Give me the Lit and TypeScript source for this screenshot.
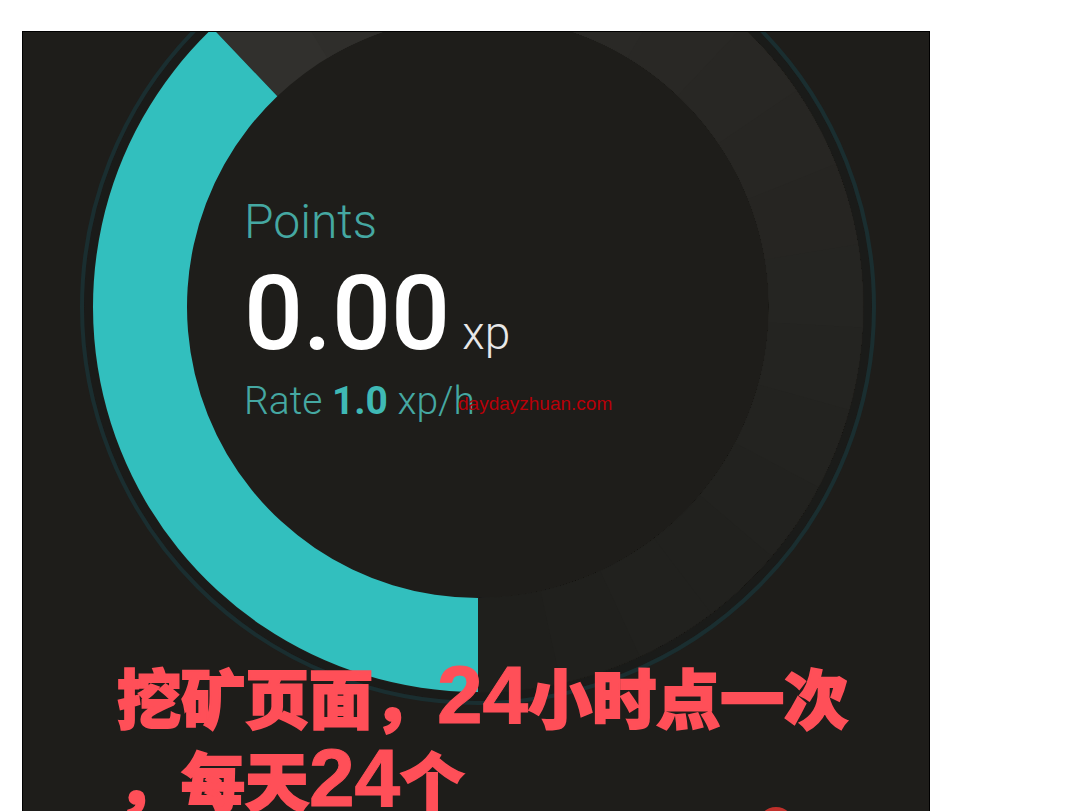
import { LitElement, html, svg, css } from "lit";
import { customElement, property } from "lit/decorators.js";

const CX = 455;
const CY = 275;
const INNER = 291;
const OUTER = 385;

/** Angles run clockwise in degrees, with 0 at the top of the dial. */
function point(radius: number, angle: number): string {
  const rad = (angle * Math.PI) / 180;
  return `${(CX + radius * Math.sin(rad)).toFixed(2)} ${(CY - radius * Math.cos(rad)).toFixed(2)}`;
}

function band(from: number, to: number): string {
  const large = to - from > 180 ? 1 : 0;
  return `M${point(OUTER, from)}A${OUTER} ${OUTER} 0 ${large} 1 ${point(OUTER, to)}L${point(INNER, to)}A${INNER} ${INNER} 0 ${large} 0 ${point(INNER, from)}Z`;
}

const FILL_START = 180;
const FILL_END = 316.4;

@customElement("points-dial")
class PointsDial extends LitElement {
  static styles = css`
    :host {
      display: block;
    }
    .dial {
      display: block;
      width: 100%;
      height: auto;
    }
    .halo {
      fill: none;
      stroke: #1a2e30;
      stroke-width: 4;
    }
    .gap {
      fill: none;
      stroke: #1a1b19;
      stroke-width: 8;
    }
    .fill {
      fill: #32bfbe;
    }
    .alert {
      fill: #c0302b;
    }
  `;

  render() {
    const start = FILL_END - 360;
    const steps = 18;
    const span = FILL_START - start;
    // Each step is painted over the tail of the one before, so no seams show.
    const track = Array.from({ length: steps }, (_, i) => {
      const t = i / (steps - 1);
      const mix = (a: number, b: number) => Math.round(a + (b - a) * Math.pow(t, 0.75));
      return svg`<path d=${band(start + (span * i) / steps, FILL_START)}
        fill="rgb(${mix(49, 31)},${mix(48, 31)},${mix(45, 28)})"></path>`;
    });
    return html`
      <svg class="dial" viewBox="0 0 906 784" aria-hidden="true">
        <circle class="gap" cx=${CX} cy=${CY} r="390"></circle>
        <circle class="halo" cx=${CX} cy=${CY} r="396"></circle>
        ${track}
        <path class="fill" d=${band(FILL_START, FILL_END)}></path>
        <circle class="alert" cx="753" cy="793" r="18"></circle>
      </svg>
    `;
  }
}

@customElement("app-root")
class AppRoot extends LitElement {
  @property() points = "0.00";
  @property() rate = "1.0";

  static styles = css`
    :host {
      display: block;
      box-sizing: border-box;
      height: 100vh;
      overflow: hidden;
      padding: 31px 142px 0 22px;
      background: #fff;
      font-family: Roboto, "Liberation Sans", sans-serif;
    }
    .panel {
      position: relative;
      display: grid;
      border: 1px solid #000;
      background: #1e1d1a;
      overflow: hidden;
    }
    .art,
    .content {
      grid-area: 1 / 1;
      min-width: 0;
    }
    .content {
      display: flex;
      flex-direction: column;
      gap: 228px;
      padding-top: 160px;
    }
    .stats {
      padding-left: 221px;
      color: #45a8a2;
      font-weight: 300;
    }
    .label,
    .value,
    .rate,
    .note {
      margin: 0;
    }
    .label {
      font-size: 48px;
      font-weight: 300;
      line-height: 60px;
    }
    .value {
      display: flex;
      align-items: baseline;
      gap: 12px;
      color: #fff;
      font-size: 104px;
      font-weight: 500;
      line-height: 124px;
    }
    .unit {
      color: #e8e8e8;
      font-size: 46px;
      font-weight: 300;
      line-height: 1;
    }
    .rate {
      font-size: 39px;
      line-height: 50px;
    }
    .rate strong {
      color: #3fb9b5;
      font-weight: 700;
    }
    .note {
      padding-left: 94px;
      color: #ff4f58;
      font-family: "Noto Sans CJK SC", sans-serif;
      font-size: 64px;
      font-weight: 900;
      line-height: 83px;
      white-space: nowrap;
      -webkit-text-stroke: 2px #ff4f58;
    }
    .digits {
      font-family: "Liberation Sans", sans-serif;
      font-size: 82px;
      line-height: 1;
      -webkit-text-stroke: 1px #ff4f58;
    }
    .watermark {
      position: absolute;
      top: 361px;
      left: 435px;
      color: #b80008;
      font-family: "Liberation Sans", sans-serif;
      font-size: 19px;
      line-height: 22px;
    }
  `;

  render() {
    return html`
      <main class="panel">
        <points-dial class="art"></points-dial>
        <div class="content">
          <section class="stats">
            <h1 class="label">Points</h1>
            <p class="value">${this.points}<span class="unit">xp</span></p>
            <p class="rate">Rate <strong>${this.rate}</strong> xp/h</p>
          </section>
          <p class="note">挖矿页面，<span class="digits">24</span>小时点一次<br />，每天<span class="digits">24</span>个</p>
        </div>
        <span class="watermark">daydayzhuan.com</span>
      </main>
    `;
  }
}
